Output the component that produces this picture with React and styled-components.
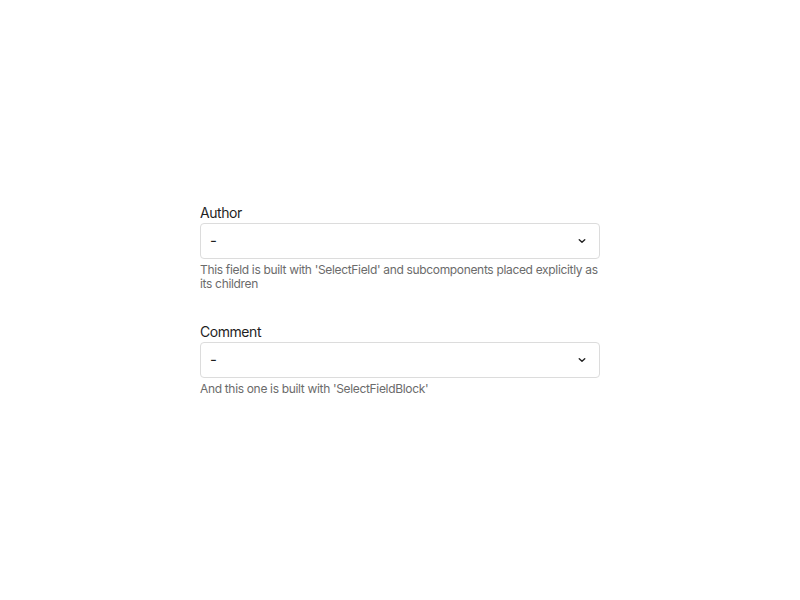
import React from 'react';
import styled, { createGlobalStyle } from 'styled-components';

const Global = createGlobalStyle`
  html, body, #root { height: 100%; }
  body {
    margin: 0;
    font-family: Inter, "Noto Sans", sans-serif;
    color: #1f1f1f;
    background: #fff;
  }
`;

const Page = styled.div`
  height: 100%;
  display: flex;
  align-items: center;
  justify-content: center;
`;

const Form = styled.div`
  width: 400px;
  display: flex;
  flex-direction: column;
  gap: 33px;
`;

const Field = styled.div`
  display: flex;
  flex-direction: column;
`;

const Label = styled.label`
  font-size: 14px;
  line-height: 16px;
  padding-bottom: 2px;
  letter-spacing: -0.45px;
  color: #1f1f1f;
`;

const SelectBox = styled.div`
  height: 36px;
  box-sizing: border-box;
  border: 1px solid #dcdcdc;
  border-radius: 4px;
  display: flex;
  align-items: center;
  justify-content: space-between;
  padding: 0 11px 0 9px;
  font-size: 15px;
  color: #1f1f1f;
`;

const Help = styled.div`
  margin-top: 4px;
  font-size: 12px;
  line-height: 14px;
  letter-spacing: -0.33px;
  color: #6b6b6b;
`;

const Chevron = () => (
  <svg width="12" height="12" viewBox="0 0 12 12" fill="none">
    <path d="M3.25 4.75L6 7.25L8.75 4.75" stroke="#222" strokeWidth="1.4" strokeLinecap="round" strokeLinejoin="round" />
  </svg>
);

function SelectField({ label, help }) {
  return (
    <Field>
      <Label>{label}</Label>
      <SelectBox>
        <span>-</span>
        <Chevron />
      </SelectBox>
      <Help>{help}</Help>
    </Field>
  );
}

export default function App() {
  return (
    <>
      <Global />
      <Page>
        <Form>
          <SelectField
            label="Author"
            help="This field is built with 'SelectField' and subcomponents placed explicitly as its children"
          />
          <SelectField label="Comment" help="And this one is built with 'SelectFieldBlock'" />
        </Form>
      </Page>
    </>
  );
}
